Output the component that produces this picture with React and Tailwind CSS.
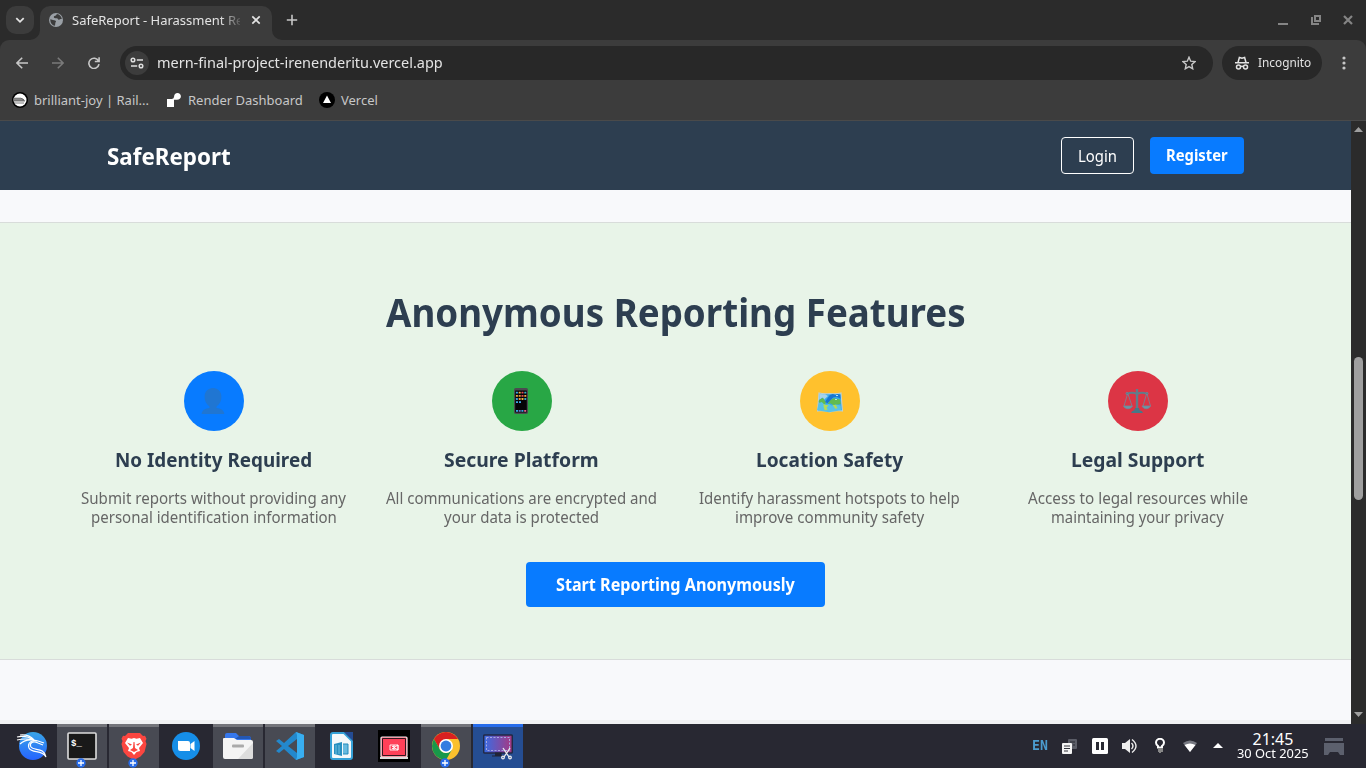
import { useLayoutEffect, useRef, useState } from "react";

// Keeps a line of text at a set width by adjusting its horizontal scale.
function Fit({ w, children, className = "" }) {
  const ref = useRef(null);
  const [scale, setScale] = useState(1);
  useLayoutEffect(() => {
    const measure = () => ref.current && setScale(w / ref.current.offsetWidth);
    measure();
    document.fonts?.ready.then(measure);
  }, [w]);
  return (
    <span className={`block shrink-0 whitespace-nowrap ${className}`} style={{ width: w }}>
      <span ref={ref} className="inline-block origin-left" style={{ transform: `scaleX(${scale})` }}>
        {children}
      </span>
    </span>
  );
}

function Tabs() {
  return (
    <div className="flex h-10 bg-[#2b2b2b]">
      <div className="ml-1.5 mt-1.5 flex h-7 w-7 items-center justify-center rounded-[10px] bg-[#3c3c3c]">
        <svg width="12" height="12" viewBox="0 0 12 12" fill="none" stroke="#e3e3e3" strokeWidth="1.8"><path d="M2.3 4.2 6 7.8l3.7-3.6" /></svg>
      </div>
      <div className="relative ml-1.5 mt-1.5 flex h-[34px] w-[232px] items-center rounded-t-[10px] bg-[#3c3c3c] pb-1.5 pl-[9px]">
        <svg className="absolute -left-2.5 bottom-0" width="10" height="10"><path d="M10 0v10H0A10 10 0 0 0 10 0" fill="#3c3c3c" /></svg>
        <svg className="absolute -right-2.5 bottom-0" width="10" height="10"><path d="M0 0v10h10A10 10 0 0 1 0 0" fill="#3c3c3c" /></svg>
        <svg width="14" height="14" viewBox="0 0 14 14">
          <circle cx="7" cy="7" r="7" fill="#9aa0a6" />
          <path d="M1.3 6.2 4 7.1l2.2.3c1 .3 1.1 1.6.2 2L6 12.8C3.2 12.4 1.2 10 1.3 6.2M8 1.1 6.8 2.5 5 3.2c-.5 1.3.1 2 1.4 2h1.4c1.3 0 1 1.4 1.9 1.5 1.4.1 1.5-1 3.1-.6C12.5 3.5 10.6 1.5 8 1.1" fill="#3c3c3c" />
        </svg>
        <div className="ml-[9px] w-[168px] overflow-hidden text-[13px] leading-5 text-[#e3e3e3] [mask-image:linear-gradient(to_right,black_148px,transparent_172px)]">
          <Fit w={171}>SafeReport - Harassment Re</Fit>
        </div>
        <svg className="ml-[11px]" width="10" height="10" fill="none" stroke="#e3e3e3" strokeWidth="1.7"><path d="m1.3 1.3 7.4 7.4m0-7.4L1.3 8.7" /></svg>
      </div>
      <svg className="ml-[14px] mt-[14px]" width="12" height="12" fill="none" stroke="#c7c7c7" strokeWidth="1.6"><path d="M6 .8v10.4M.8 6h10.4" /></svg>
      <div className="ml-auto mr-[13px] flex h-10 items-center gap-[22px]">
        <svg width="11" height="10"><path d="M0 8h10v2H0z" fill="#858585" /></svg>
        <svg width="10" height="10" fill="none" stroke="#858585" strokeWidth="2"><path d="M4 1h5v5H4zM1 2v7h7" /></svg>
        <svg width="10" height="10" fill="none" stroke="#858585" strokeWidth="2.2"><path d="m1 1 8 8m0-8L1 9" /></svg>
      </div>
    </div>
  );
}

function Toolbar() {
  return (
    <div className="flex h-[46px] items-center rounded-t-[9px] bg-[#3c3c3c]">
      <svg className="ml-4" width="12" height="12" fill="none" stroke="#c7c7c7" strokeWidth="1.6"><path d="M6.2.7.9 6l5.3 5.3M1 6h11" /></svg>
      <svg className="ml-6" width="12" height="12" fill="none" stroke="#7a7a7a" strokeWidth="1.6"><path d="M5.8.7 11.1 6l-5.3 5.3M11 6H0" /></svg>
      <svg className="ml-6" width="12" height="12" fill="none" stroke="#c7c7c7" strokeWidth="1.6"><path d="M10.5 4A5.1 5.1 0 1 0 11 7.2M11.1.2v4.3H6.8" /></svg>
      <div className="ml-5 flex h-[34px] w-[1093px] items-center rounded-full bg-[#282828] pl-[5px]">
        <div className="flex h-6 w-6 items-center justify-center rounded-full bg-[#3c3c3c]">
          <svg width="14" height="12" viewBox="0 0 14 12" fill="none" stroke="#dedede" strokeWidth="1.5"><circle cx="3" cy="3" r="1.8" /><circle cx="11" cy="9" r="1.8" /><path d="M6.8 3H13M1 9h6.2" /></svg>
        </div>
        <div className="mb-0.5 ml-2 text-[15px] leading-6 text-[#e3e3e3]"><Fit w={285.5}>mern-final-project-irenenderitu.vercel.app</Fit></div>
        <svg className="ml-auto mr-[17px]" width="14" height="14" viewBox="0 0 14 14" fill="none" stroke="#c7c7c7" strokeWidth="1.4"><path d="m7 1.2 1.7 4 4.3.4-3.2 2.9.9 4.3L7 10.6l-3.7 2.2.9-4.3L1 5.6l4.3-.4z" /></svg>
      </div>
      <div className="ml-[9px] flex h-[34px] w-[100px] items-center rounded-full bg-[#282828] pl-[13px] text-[12.5px] text-[#e3e3e3]">
        <svg width="14" height="14" viewBox="0 0 14 14" fill="none" stroke="#e3e3e3" strokeWidth="1.5"><path d="M0 6.8h14M3 6.5l1.4-5 2.6.7 2.6-.7 1.4 5" /><circle cx="3.5" cy="11" r="2" /><circle cx="10.5" cy="11" r="2" /><path d="M5.4 10.6q1.6-.7 3.2 0" /></svg>
        <Fit w={53} className="ml-[9px]">Incognito</Fit>
      </div>
      <svg className="ml-5" width="4" height="14" fill="#c7c7c7"><circle cx="2" cy="2" r="1.6" /><circle cx="2" cy="7" r="1.6" /><circle cx="2" cy="12" r="1.6" /></svg>
    </div>
  );
}

function Bookmarks() {
  return (
    <div className="flex h-[35px] items-center border-b border-[#4a4a4a] bg-[#3c3c3c] pb-[7px] pl-3 text-[13px] leading-[18px] text-[#c7c7c7]">
      <svg width="16" height="16" viewBox="0 0 16 16"><circle cx="8" cy="8" r="8" fill="#000" /><circle cx="8" cy="8" r="6.5" fill="#fff" /><path d="M2 6h8.2l3.4 3H2" fill="#aaa" /><path d="M2 6.2h7l3 1.8H2M2 9h11M2 11h10" stroke="#555" strokeWidth=".8" fill="none" /></svg>
      <Fit w={115} className="ml-1.5">brilliant-joy | Rail...</Fit>
      <svg className="ml-[17px]" width="16" height="16" viewBox="0 0 16 16" fill="#fff"><path d="M1 7h5q2 0 2.1-2.4C8.2 2.2 9.5 1 11.5 1c2 0 3.4 1.3 3.4 3.2 0 2.2-1.6 3.5-3.9 3.6H8V15H1z" /></svg>
      <Fit w={115} className="ml-[6px]">Render Dashboard</Fit>
      <svg className="ml-4" width="16" height="16"><circle cx="8" cy="8" r="8" fill="#000" /><path d="m8 3.6 4 7.4H4z" fill="#fff" /></svg>
      <Fit w={37} className="ml-1.5">Vercel</Fit>
    </div>
  );
}

const Person = () => (
  <svg className="-ml-0.5" width="24" height="28" viewBox="0 0 24 28" fill="#2076d2"><path d="M12 1c5 0 8.4 3.5 8.4 8.7 0 4-1.5 7.5-4.9 9.700v1.7c3.800.5 7.200 1.400 7.900 5.900H.6c.7-4.5 4.100-5.400 7.900-5.900v-1.7C5.100 17.200 3.600 13.700 3.600 9.700 3.600 4.500 7 1 12 1" /></svg>
);
const Phone = () => (
  <svg className="-ml-0.5" width="14" height="26" viewBox="0 0 14 26">
    <rect width="14" height="26" rx="1.8" fill="#4b4b50" /><rect x="1.2" y="2.5" width="11.6" height="22" fill="#050507" />
    {[3.7, 6.9, 10.1].map((y, r) => ["#3ba9e6", "#f19b3c", "#e44b56", "#3ba9c6"].map((c, i) => <rect key={`${y}${i}`} x={1.9 + i * 2.8} y={y} width="2" height="1.9" rx=".4" fill={(i + r) % 3 === 1 ? "#efb340" : c} />))}
    <path d="M2 13.3h2v1.8H2M5 13.3h2v1.8H5M2 22h2v1.8H2M7.4 22h2v1.8h-2" fill="#3ba9e6" /><path d="M4.7 22h2v1.8h-2" fill="#6d72c8" /><path d="M10.2 22h2v1.8h-2" fill="#e75b91" />
  </svg>
);
const MapIcon = () => (
  <svg className="mt-0.5" width="26" height="21" viewBox="0 0 26 21">
    <path d="M2 1q5 1.3 11 .5 6 .7 11-.5l1.500 18q-6-1-12.500 1Q6 18.2.5 19z" fill="#36a9ea" stroke="#c1d1cf" strokeWidth="1.1" />
    <path d="m2.2 2 6 .3L11 4 7 7.8 5.3 5.6 2.3 8z" fill="#a5d3ec" /><path d="M2 8 6 5.8l3 4.8-1.4 1.9-6-2.2zM13 8l4-1.7 6 1.2.7 4.3-6.5 2-3.4-2.4-3 .6z" fill="#61bb51" />
    <path d="m12.8 3 3-1 3 1 1.5-1 3 .8.3 4-4-2-3.400.7-3 3-3 3-2-2z" fill="#1976d2" /><path d="m1.8 11 3-1 3 3 4-1 3 1.6 4-1 4.9 1 .3 4.7-12 2-12-2z" fill="#58c2e5" />
    <path d="m6.5 12 5 1.4-2 2.1 1.2 2-3 .7-1-3M15.6 12.8l3.4.5 1.5 3-2.3.5M12 9l3 1" fill="#b5dc54" /><path d="M19 3h2v1h-2M18 7h2v1h-2" fill="#b8e1e9" />
  </svg>
);
const Scales = () => (
  <svg className="-ml-0.5" width="28" height="28" viewBox="0 0 28 28" fill="none" stroke="#71899a">
    <path d="M14 2v22" strokeWidth="2.4" stroke="#607d8b" /><path d="M4 7q5-2.3 10 0 5-2.3 10 0" strokeWidth="2" stroke="#607d8b" /><circle cx="4" cy="6.5" r="1" fill="#546e7a" /><circle cx="24" cy="6.5" r="1" fill="#546e7a" />
    <path d="M4.5 7 1 19m4-12 4 12M23.5 7 20 19m4-12 3.5 12" strokeWidth=".8" />
    <path d="M.5 19h9q-1.3 2.8-4.5 2.8T.5 19M19 19h8.5q-1.3 2.8-4.3 2.800T19 19" fill="#6c97a5" strokeWidth=".8" /><path d="M12 21h4l.6 2.2q3 .4 3.4 2.800H8q.4-2.400 3.400-2.800z" fill="#467888" stroke="none" />
  </svg>
);

const features = [
  { icon: Person, color: "bg-[#087bff]", title: "No Identity Required", tw: 197, lines: [["Submit reports without providing any", 265], ["personal identification information", 246]] },
  { icon: Phone, color: "bg-[#28a745]", title: "Secure Platform", tw: 155, lines: [["All communications are encrypted and", 271], ["your data is protected", 155]] },
  { icon: MapIcon, color: "bg-[#ffc12d]", title: "Location Safety", tw: 147, lines: [["Identify harassment hotspots to help", 261], ["improve community safety", 189]] },
  { icon: Scales, color: "bg-[#dc3545]", title: "Legal Support", tw: 133, lines: [["Access to legal resources while", 220], ["maintaining your privacy", 173]] },
];

function Site() {
  return (
    <main className="flex h-full w-[1351px] flex-col bg-[#f8f9fb]">
      <header className="flex h-[69px] shrink-0 items-center justify-between bg-[#2d3e50] pl-[107px] pr-[107px] text-white">
        <div className="text-[24px] font-bold leading-8"><Fit w={124}>SafeReport</Fit></div>
        <div className="flex gap-4 text-[16px]">
          <button className="flex h-[37px] w-[73px] items-center justify-center rounded border border-white pt-px"><Fit w={39}>Login</Fit></button>
          <button className="flex h-[37px] w-[94px] items-center justify-center rounded bg-[#087bff] pb-0.5 font-bold"><Fit w={62}>Register</Fit></button>
        </div>
      </header>
      <section className="mt-8 flex h-[438px] shrink-0 flex-col items-center border-y border-[#d8dcda] bg-[#e8f4e8] pt-[62px]">
        <h2 className="flex h-[56px] items-center text-[39.5px] font-bold text-[#2d3e50]"><Fit w={580}>Anonymous Reporting Features</Fit></h2>
        <div className="mt-[30px] grid w-[1232px] grid-cols-4">
          {features.map(({ icon: Icon, color, title, tw, lines }) => (
            <article key={title} className="flex flex-col items-center">
              <div className={`flex h-[60px] w-[60px] items-center justify-center rounded-full ${color}`}><Icon /></div>
              <h3 className="mt-[17px] flex h-6 items-center text-[20px] font-bold text-[#2d3e50]"><Fit w={tw}>{title}</Fit></h3>
              <div className="mt-[17px] flex flex-col items-center text-[16px] leading-[19px] text-[#666]">
                {lines.map(([text, w]) => <Fit key={text} w={w}>{text}</Fit>)}
              </div>
            </article>
          ))}
        </div>
        <button className="mt-[35px] flex h-[45px] w-[299px] items-center justify-center rounded bg-[#087bff] text-[17.6px] font-bold text-white"><Fit w={239}>Start Reporting Anonymously</Fit></button>
      </section>
      <div className="mt-auto h-1 bg-[#f0f1f3]" />
    </main>
  );
}

const Plus = () => (
  <svg className="absolute bottom-0 left-[19px]" width="10" height="10"><circle cx="5" cy="5" r="4.7" fill="#276be8" /><path d="M5 2v6M2 5h6" stroke="#fff" strokeWidth="1.3" /></svg>
);
const Kali = () => (
  <svg className="ml-1" width="32" height="30" viewBox="0 0 32 30"><defs><linearGradient id="kali" x2="0" y2="1"><stop stopColor="#39a5e8" /><stop offset="1" stopColor="#2563ff" /></linearGradient></defs><circle cx="17" cy="15" r="14" fill="url(#kali)" /><g fill="none" stroke="#fff" strokeWidth="1.2"><path d="M1 6q9-2 17 3Q9 8 4 13M1 9q8-2 17 0" /><path d="M22 12c-6-3-9 1-7 4 3 4 13 0 15 10-4-8-14-3-17-9-2-5 3-9 9-7l6 2M22 12l5 2M4 4q9-1 14 5" /></g></svg>
);
const Terminal = () => (
  <svg width="30" height="28" viewBox="0 0 30 28"><rect x="1" y="1" width="28" height="26" rx="1" fill="#191919" stroke="#ddd" strokeWidth="1.6" /><text x="4" y="13.500" fill="#fff" className="font-['Liberation_Mono'] text-[9px] font-bold">$_</text></svg>
);
const Brave = () => (
  <svg width="26" height="28" viewBox="0 0 26 28"><path d="M7 1h12l3 3 2-.3 1.5 3-1 2.3 1 3-2 8-4 4.5L13 28l-6.5-3.5-4-4.5-2-8 1-3L.5 6.7l1.500-3L4 4z" fill="#fb4640" /><path d="m7 6 3.500.7L13 6l2.500.700L19 6l3 5-4 5 1 3-3.500 1-2.500 3-2.500-3-3.500-1 1-3-4-5z" fill="#fff" /><path d="m6 10.500 5 2-2 1.2zM20 10.500l-5 2 2 1.2zM12.500 10h1l.5 6 3 2-4 2-4-2 3-2z" fill="#fb4640" /></svg>
);
const ZoomApp = () => (
  <svg width="28" height="28"><circle cx="14" cy="14" r="14" fill="#168ee8" /><path d="M6 9h10q2 0 2 2v8H8.500Q6 19 6 16.500zM18.500 12l4-3v10l-4-3z" fill="#fff" /></svg>
);
const Folder = () => (
  <svg width="30" height="28" viewBox="0 0 30 28"><path d="M2 3q0-2 2-2h9l3 3h9q3 0 3 3v4H2z" fill="#3577ec" /><path d="M16 4h9q3 0 3 3H12z" fill="#2457b2" /><path d="M1 6h10l3 2h14q2 0 2 2v15q0 2-2 2H2q-2 0-2-2V7q0-1 1-1" fill="#f4f4f4" /><path d="M30 11v14q0 2-2 2H15z" fill="#ddd" /><rect x="9" y="12.500" width="12" height="3" rx="1" fill="#aaa" /></svg>
);
const Code = () => (
  <svg width="28" height="28" viewBox="0 0 28 28"><path d="m20 0 8 3v22l-8 3L8 17l-5 4-3-2 6-5-6-5 3-2 5 4z" fill="#2388cc" /><path d="m21 7-9 7 9 7z" fill="#484a53" /><path d="m20 0 8 3v22l-8 3 1-3V3z" fill="#38aef0" /></svg>
);
const Writer = () => (
  <svg width="24" height="28" viewBox="0 0 24 28"><path d="M1 3q0-2 2-2h11l8 8v16q0 2-2 2H3q-2 0-2-2z" fill="#f4f8fa" stroke="#35a1d7" strokeWidth="2" /><path d="M14 0h9v9z" fill="#244b92" /><path d="M4 12l8-2v14l-8-2z" fill="#278fc0" /><path d="M13 12h5v10h-5" fill="#67badf" stroke="#258bbb" /><path d="M6 13v9m3-9v9" stroke="#93d5ed" strokeWidth=".7" /></svg>
);
const Recorder = () => (
  <svg width="32" height="32"><path d="M0 0h32v32H0z" fill="#000" /><rect x="3" y="7" width="26" height="20" rx="1" fill="#ff4058" stroke="#eee" strokeWidth="1.2" /><path d="M4.500 8.500h23v17h-23z" fill="none" stroke="#31151d" /><path d="M2 27h28v2H2z" fill="#ddd" /><path d="M12 15h8v5h-8zM14 16.500h2v2h-2M16 15v5M16 17.500l4-2.500v5z" fill="none" stroke="#fff" strokeWidth=".9" /></svg>
);
const Chrome = () => (
  <svg width="28" height="28" viewBox="0 0 28 28"><circle cx="14" cy="14" r="14" fill="#fbc02d" /><path d="M14 14 7.900 17.500 1.900 7A14 14 0 0 1 26.100 7H14z" fill="#d82020" /><path d="M1.900 7 8 17.500a7 7 0 0 0 9.500 2.600l2.500-2.600L14 28A14 14 0 0 1 1.900 7" fill="#18984a" /><circle cx="14" cy="14" r="7" fill="#fff" /><circle cx="14" cy="14" r="5.400" fill="#347de0" /></svg>
);
const Capture = () => (
  <svg width="30" height="28" viewBox="0 0 30 28"><defs><linearGradient id="capture"><stop stopColor="#386de5" /><stop offset="1" stopColor="#a93881" /></linearGradient></defs><rect x=".7" y="3" width="28.600" height="18" rx="1" fill="url(#capture)" stroke="#222945" strokeWidth="1.5" /><path d="M3.500 5.500h23v13h-23z" fill="none" stroke="#a5a7e2" strokeDasharray="2 1.500" /><path d="M12 21h6v3h-6M9 24h12" stroke="#202436" strokeWidth="1.200" fill="#202436" /><g fill="none" stroke="#eee" strokeWidth="1.300"><path d="m20 16 6 9m1-9-6 9" /><circle cx="20" cy="25.500" r="1.300" /><circle cx="27" cy="25.500" r="1.300" /></g></svg>
);

const apps = [
  { icon: Kali }, { icon: Terminal, active: true, plus: true }, { icon: Brave, active: true, plus: true }, { icon: ZoomApp },
  { icon: Folder, active: true }, { icon: Code, active: true }, { icon: Writer }, { icon: Recorder },
  { icon: Chrome, active: true, plus: true }, { icon: Capture, selected: true },
];

function Taskbar() {
  return (
    <footer className="flex h-11 shrink-0 items-center bg-[#282832] text-white">
      <div className="ml-[5px] flex h-full gap-0.5">
        {apps.map(({ icon: Icon, active, plus, selected }, i) => (
          <div key={i} className={`relative flex h-full w-[50px] items-center justify-center border-t-[3px] pb-[3px] ${selected ? "border-[#256bea] bg-[#254d92]" : active ? "border-[#73747a] bg-[#484a53]" : "border-transparent"}`}>
            <Icon />
            {plus && <Plus />}
          </div>
        ))}
      </div>
      <div className="ml-auto flex h-full items-center">
        <Fit w={16} className="mb-0.5 font-['DejaVu_Sans_Mono'] text-[14px] font-bold text-[#4b9bce]">EN</Fit>
        <svg className="ml-[14px]" width="16" height="16" viewBox="0 0 16 16"><rect x="6" y="1" width="9" height="10" rx="1" fill="#5b5d67" /><path d="M8 4h5m-2 3h2" stroke="#292a33" /><rect x="0" y="5" width="10" height="11" rx="1" fill="#f4f4f4" /><path d="M2 8h6M2 10.500h6M2 13h4" stroke="#34353c" /></svg>
        <svg className="ml-[14px]" width="16" height="16"><rect width="16" height="16" rx="1.500" fill="#fff" /><path d="M4 4h3v8H4M9 4h3v8H9" fill="#292a33" /></svg>
        <svg className="ml-[14px]" width="16" height="16" fill="none" stroke="#eee" strokeWidth="1.400"><path d="M0 5h3l5-4v14l-5-4H0z" fill="#eee" stroke="none" /><path d="M9.500 5q3 3 0 6M10 1.500q8 6.500 0 13" /></svg>
        <svg className="ml-[17px]" width="10" height="16" fill="none" stroke="#fff" strokeWidth="2"><path d="M3 9.500V8Q1 6.500 1 4.800a4 4 0 0 1 8 0Q9 6.500 7 8v1.500z" /><path d="M3 11h4v2H3M5 13v2" stroke="#888" /></svg>
        <svg className="ml-[17px]" width="16" height="16" viewBox="0 0 16 16"><path d="M1 5q7-5 14 0l-7 9z" fill="#777982" /><path d="M2.500 7q5.500-3 11 0L8 14z" fill="#fff" /></svg>
        <svg className="ml-[14px]" width="12" height="6"><path d="m6 0 5 5H1z" fill="#fff" /></svg>
        <div className="ml-[13px] flex w-[72px] flex-col items-center pt-px"><Fit w={41} className="text-[16px] leading-[15px]">21:45</Fit><Fit w={72} className="text-[12.500px] leading-[14px]">30 Oct 2025</Fit></div>
        <svg className="ml-[15px] mr-[22px]" width="20" height="17" fill="#5c606d"><path d="M1 0h18v3H1zM0 5h20v12h-4l-2-3H6l-2 3H0z" /></svg>
      </div>
    </footer>
  );
}

export default function App() {
  return (
    <div className="flex h-[768px] w-[1366px] flex-col overflow-hidden bg-[#2b2b2b] font-['Noto_Sans',sans-serif]">
      <Tabs />
      <div className="bg-[#2b2b2b]"><Toolbar /></div>
      <Bookmarks />
      <div className="flex h-[603px] shrink-0">
        <Site />
        <aside className="flex w-[15px] flex-col items-center bg-[#2b2b2b] pt-1.5">
          <svg width="9" height="5"><path d="m4.500 0 4.500 5H0z" fill="#9f9f9f" /></svg>
          <div className="mt-[225px] h-[143px] w-[9px] rounded-full bg-[#9f9f9f]" />
          <svg className="mb-[7px] mt-auto" width="9" height="5"><path d="M0 0h9L4.500 5z" fill="#9f9f9f" /></svg>
        </aside>
      </div>
      <Taskbar />
    </div>
  );
}
